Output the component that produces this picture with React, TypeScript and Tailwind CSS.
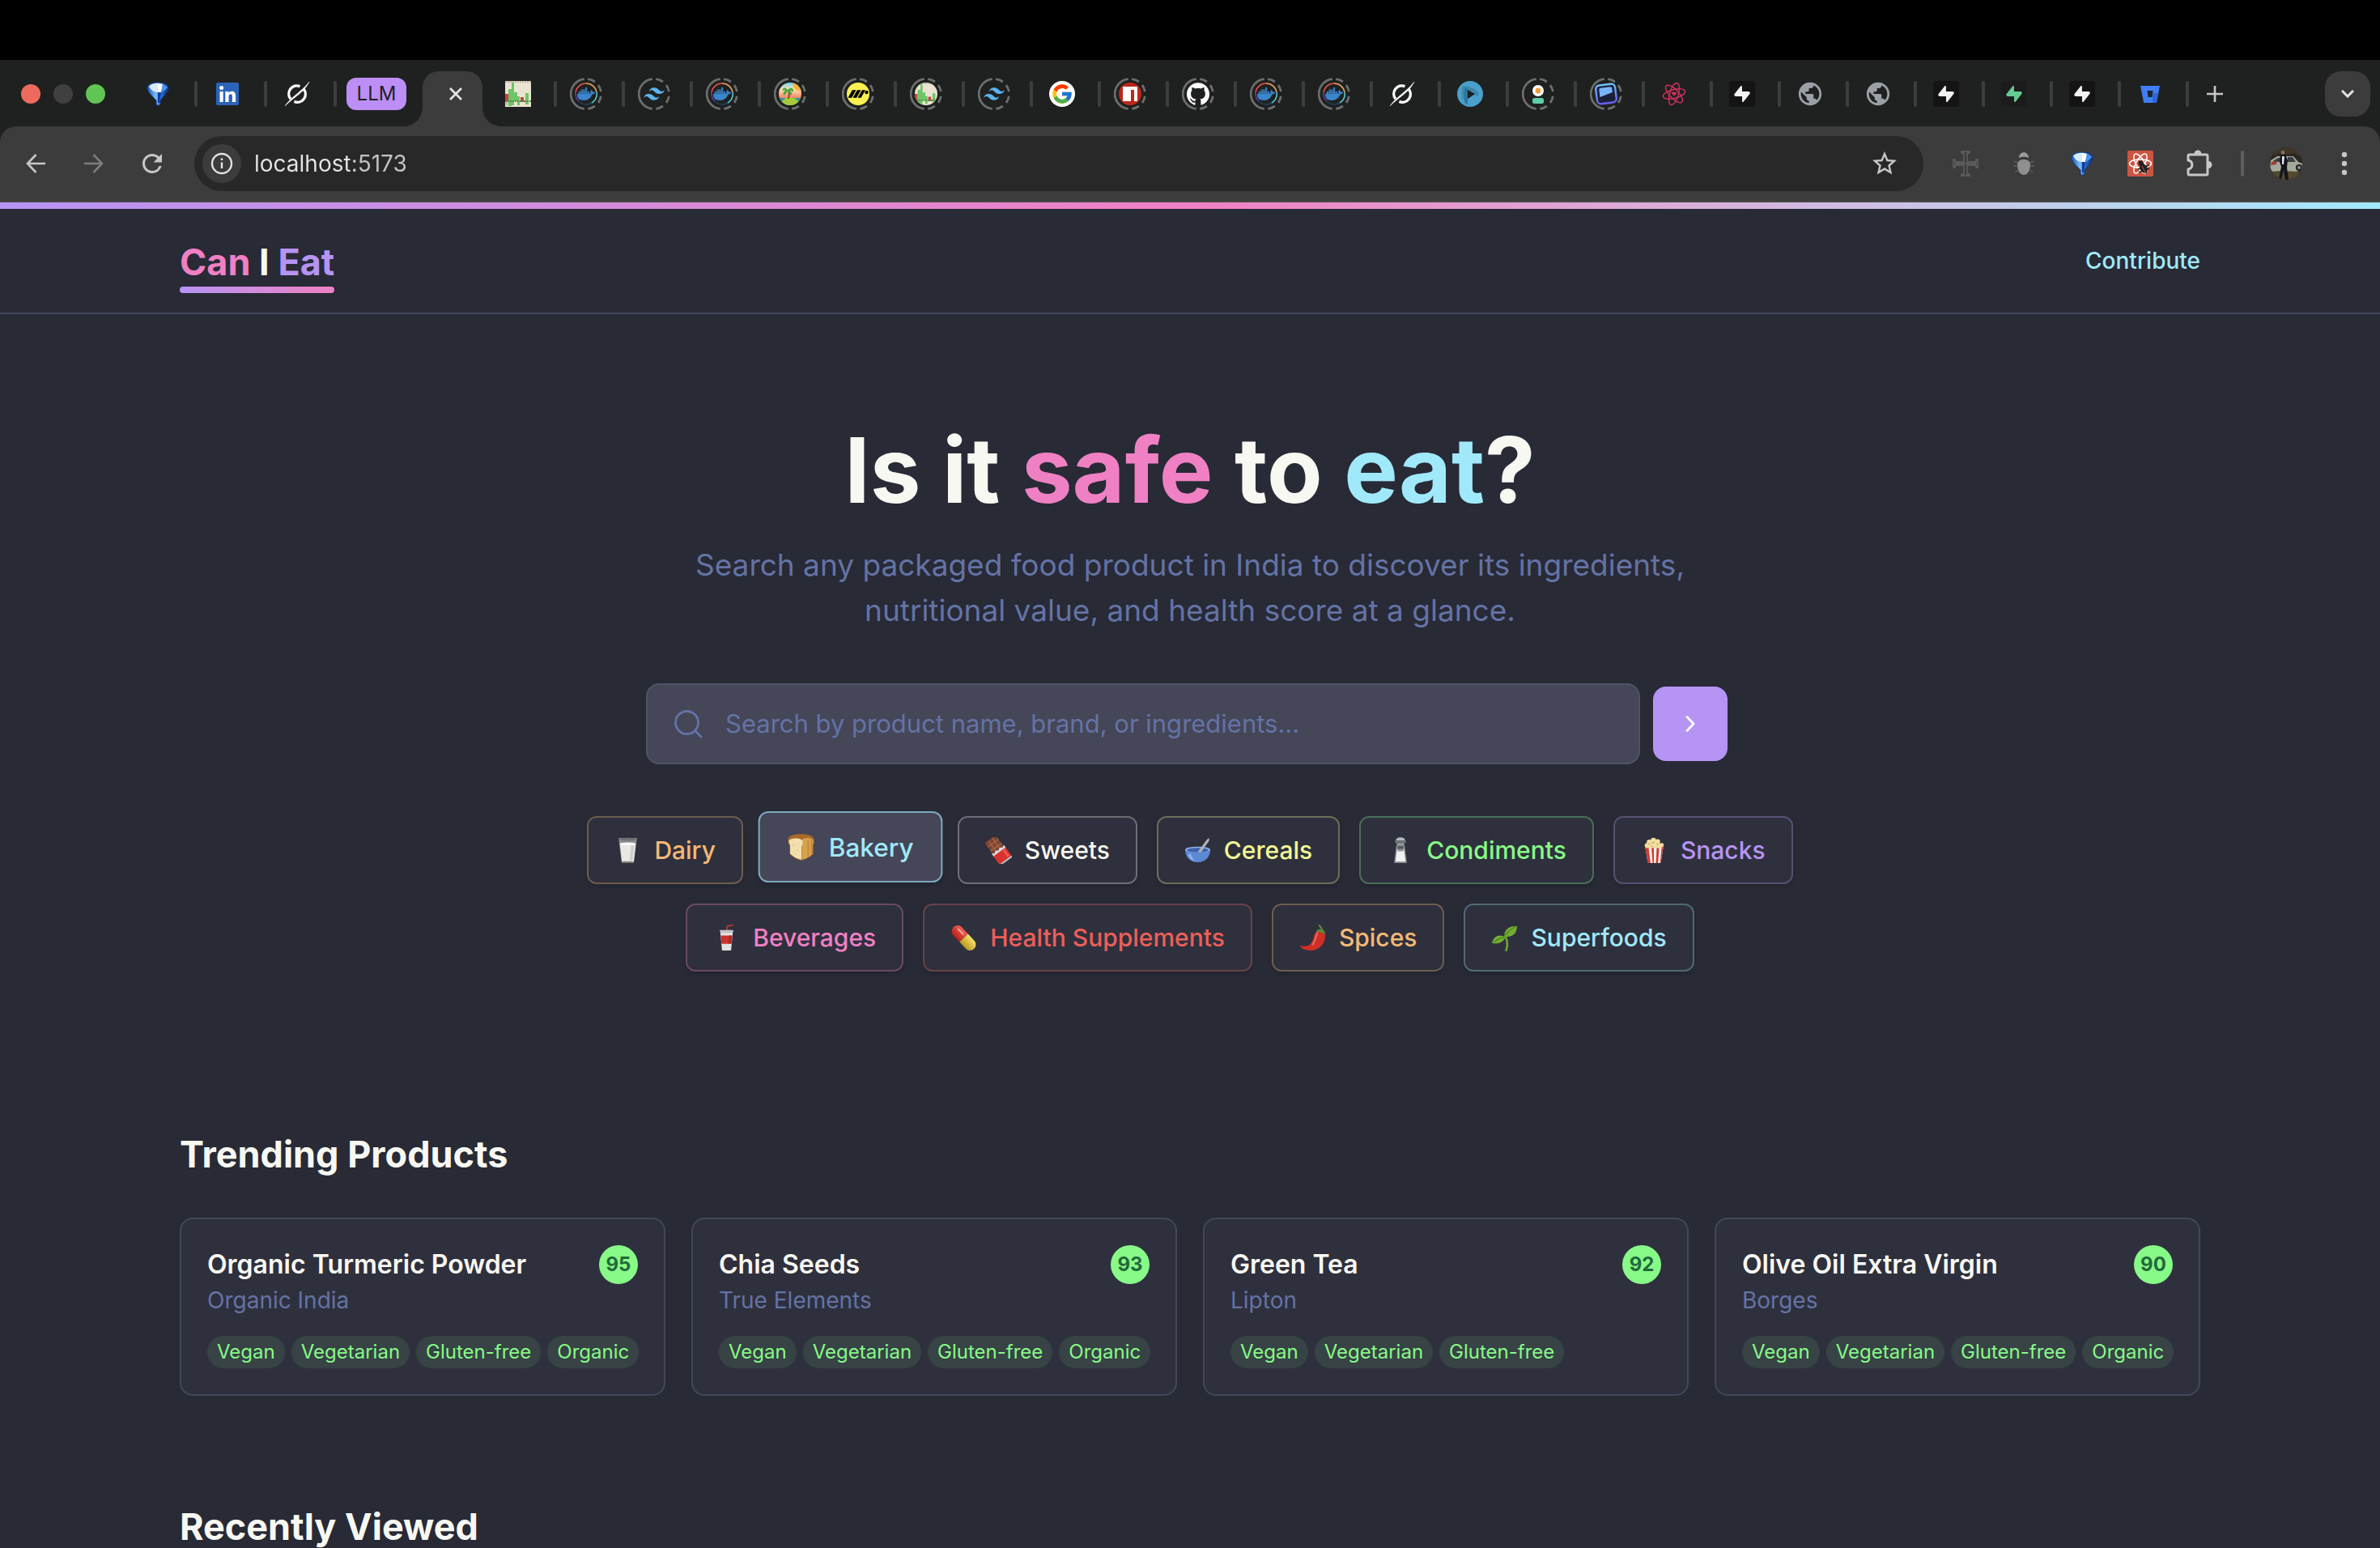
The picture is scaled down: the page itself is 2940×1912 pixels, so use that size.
import React from "react";
import { FcGoogle } from "react-icons/fc";
import { SiDocker, SiGithub, SiTailwindcss, SiSupabase } from "react-icons/si";
import { MdPublic, MdStarOutline, MdRefresh } from "react-icons/md";

/* ---------- tab favicons ---------- */

function LoadingRing({ children }: { children: React.ReactNode }) {
  return (
    <span className="relative flex size-10 items-center justify-center">
      <svg viewBox="0 0 40 40" className="absolute inset-0 size-10" fill="none" stroke="#6e6e6e" strokeWidth="2.8">
        <path d="M17.7 1.6A18.5 18.5 0 0 0 17.7 38.4" />
        <path d="M22.3 1.6A18.5 18.5 0 0 1 30.9 5" />
        <path d="M35 9.1A18.5 18.5 0 0 1 38.3 17.1" />
        <path d="M38.3 22.9A18.5 18.5 0 0 1 35 30.9" />
        <path d="M30.9 35A18.5 18.5 0 0 1 22.3 38.4" />
      </svg>
      {children}
    </span>
  );
}

function Funnel() {
  return (
    <svg viewBox="0 0 32 32" className="size-8">
      <defs>
        <linearGradient id="funnelBody" x1="0" x2="1">
          <stop offset="0" stopColor="#1a56b8" />
          <stop offset="0.4" stopColor="#7dbcf5" />
          <stop offset="0.6" stopColor="#2f7be0" />
          <stop offset="1" stopColor="#0b2a78" />
        </linearGradient>
      </defs>
      <path d="M3 9C3 4 9 2 16 2s13 2 13 7c0 4-6 10-10 15v4c0 3-5 3-5 0v-4C9 19 3 13 3 9z" fill="url(#funnelBody)" stroke="#123a86" strokeWidth="1" />
      <path d="M5 7c2-3 6-4 10-4l1 11c-4 0-8-2-11-7z" fill="#d6ebfd" />
      <path d="M15 3c3 0 5 0 7 1l-2 10h-4z" fill="#fff" />
      <path d="M22 4c3 1 5 2 6 4-2 3-5 5-8 6z" fill="#4a94ec" />
      <path d="M16 14h4l-2 13h-2z" fill="#0f3da0" />
    </svg>
  );
}

function LinkedIn() {
  return (
    <svg viewBox="0 0 28 28" className="size-7">
      <rect width="28" height="28" rx="2" fill="#2b63b8" />
      <circle cx="6.6" cy="6.4" r="2.5" fill="#fff" />
      <path d="M4.5 11h4.2v13H4.5zM11.3 11h4v1.8c.8-1.3 2.2-2.1 4-2.1 3.6 0 4.8 2.2 4.8 5.8V24h-4.2v-6.7c0-1.7-.4-3-2-3-1.8 0-2.4 1.3-2.4 3V24h-4.2z" fill="#fff" />
    </svg>
  );
}

function Slashed() {
  return (
    <svg viewBox="0 0 32 32" className="size-8" fill="none" stroke="#fff">
      <path d="M19.5 6.6A10 10 0 0 0 8 22.2" strokeWidth="3.4" />
      <path d="M12.4 25.4A10 10 0 0 0 24 9.8" strokeWidth="3.4" />
      <path d="M1 31C8 20 22 13 31 1 25 14 12 20 1 31z" fill="#fff" strokeWidth="0.5" />
    </svg>
  );
}

function BarChart({ round = false }: { round?: boolean }) {
  return (
    <svg viewBox="0 0 32 32" className={round ? "size-7 rounded-full" : "size-8"}>
      <rect width="32" height="32" fill="#ebe3d2" />
      <path d="M0 1h32" stroke="#a9a595" strokeWidth="1.5" strokeDasharray="2 1" />
      <path d="M0 16h4v9H0zM19 20h4v6h-4zM23 24h5v2h-5z" fill="#c9443c" />
      <path d="M4 10h4v21H4zM8 2h3v28H8zM11 14h4v11h-4zM15 19h3v11h-3zM25 15h4v14h-4z" fill="#6cc566" />
      <path d="M0 25h32" stroke="#5b8a4c" strokeWidth="2" strokeDasharray="2 1" />
      <path d="M2 22v8M21 21v5" stroke="#8a5a3a" strokeWidth="0.8" />
    </svg>
  );
}

function DockerTab() {
  return (
    <span className="relative flex size-7 items-center justify-center">
      <svg viewBox="0 0 28 28" className="absolute inset-0 size-7" fill="none" strokeWidth="1.5">
        <path d="M14 1A13 13 0 0 0 1 12" stroke="#e0524e" />
        <path d="M1 12A13 13 0 0 0 5 23" stroke="#6a3f9e" />
        <path d="M5 23A13 13 0 0 0 21 25" stroke="#22405a" />
        <path d="M21 25A13 13 0 0 0 27 12" stroke="#5bd0d6" />
        <path d="M27 12A13 13 0 0 0 14 1" stroke="#e8a65c" />
      </svg>
      <SiDocker className="size-[22px] text-[#3a86cd]" />
    </span>
  );
}

function Island() {
  return (
    <svg viewBox="0 0 28 28" className="size-7 rounded-full">
      <defs>
        <linearGradient id="islandSky" x1="0" y1="0" x2="0" y2="1">
          <stop offset="0" stopColor="#6fd3ee" />
          <stop offset="0.3" stopColor="#fde3b4" />
          <stop offset="0.65" stopColor="#f58b6c" />
        </linearGradient>
      </defs>
      <rect width="28" height="28" fill="url(#islandSky)" />
      <path d="M18 0h10v10a8 8 0 0 1-10-10z" fill="#f9b13c" />
      <path d="M0 19h28v9H0z" fill="#2f95a0" />
      <ellipse cx="14" cy="26" rx="11" ry="7.5" fill="#a6cb38" />
      <path d="M11 20c1-4 1-7 0-11l2 0c1 4 1 7 0 11z" fill="#7b4b22" />
      <path d="M11 9C8 5 5 6 4 10c2-1 3-1 4 0-2 1-3 3-2 6 2-1 4-3 5-6 2 3 3 5 5 6 0-3 0-5-2-6 1 0 3 0 4 2 1-5-3-7-7-3z" fill="#4fa53a" />
    </svg>
  );
}

function YellowMark() {
  return (
    <svg viewBox="0 0 28 28" className="size-7">
      <circle cx="14" cy="14" r="14" fill="#fcf151" />
      <path d="M2 18.500L7 9.500h4L6 18.500zM8 18.500l5-9h4l-5 9zM14 18.500l5-9h3.500l-5 9z" fill="#000" stroke="#000" strokeWidth="0.6" />
      <circle cx="24.500" cy="12" r="2.200" fill="#000" />
    </svg>
  );
}

function GoogleTab() {
  return (
    <span className="flex size-8 items-center justify-center rounded-full bg-white">
      <FcGoogle className="size-7" />
    </span>
  );
}

function Npm() {
  return (
    <svg viewBox="0 0 28 28" className="size-7">
      <circle cx="14" cy="14" r="14" fill="#bb271a" />
      <path d="M5 5h18v18h-4V9h-4v14H5z" fill="#fff" />
      <path d="M15 9h4v14h-4z" fill="#bb271a" />
    </svg>
  );
}

function PlayTab() {
  return (
    <svg viewBox="0 0 32 32" className="size-8">
      <circle cx="16" cy="16" r="16" fill="#4a9fcb" />
      <path d="M6 7c5-2 15 1 20 7 1 2 0 4-1 5L13 12v12c-4 0-7-2-7-5z" fill="#3b87ae" />
      <path d="M13 11l9 5-9 6v7c-3-1-4-3-4-5V10c0-2 2-3 4 1z" fill="#2f7398" />
      <path d="M13 11l9 5-9 6z" fill="#172026" />
    </svg>
  );
}

function PersonTab() {
  return (
    <svg viewBox="0 0 28 28" className="size-7">
      <circle cx="14" cy="10" r="7" fill="#fff" />
      <circle cx="14" cy="10" r="3.4" fill="#ef9b36" />
      <rect x="7" y="19" width="14" height="7" rx="2.5" fill="#5ecfa6" />
    </svg>
  );
}

function SlateTab() {
  return (
    <svg viewBox="0 0 28 28" className="size-7">
      <defs>
        <linearGradient id="slate" x1="0" y1="0" x2="0" y2="1">
          <stop offset="0" stopColor="#6cc3f7" />
          <stop offset="1" stopColor="#6a5cf0" />
        </linearGradient>
      </defs>
      <g transform="rotate(-7 14 14)">
        <rect x="2" y="2.5" width="24" height="23" rx="5" fill="#1b1f38" stroke="url(#slate)" strokeWidth="2.4" />
        <path d="M6 8c0-1 .8-2 2-2h12c1 0 2 1 2 2v5L6 17z" fill="#77b5f8" />
      </g>
    </svg>
  );
}

function AtomTab() {
  return (
    <svg viewBox="0 0 32 32" className="size-8" fill="none" stroke="#d2325f" strokeWidth="1.4">
      <ellipse cx="16" cy="16" rx="14" ry="5.4" transform="rotate(-14 16 16)" />
      <ellipse cx="16" cy="16" rx="14" ry="5.4" transform="rotate(46 16 16)" />
      <ellipse cx="16" cy="16" rx="14" ry="5.4" transform="rotate(106 16 16)" />
      <path d="M16 18.5l-3-3c-1-2 2-3 3-1 1-2 4-1 3 1z" fill="#d2325f" stroke="none" />
    </svg>
  );
}

function BoltTab({ green = false }: { green?: boolean }) {
  return (
    <span className={green ? "flex size-8 items-center justify-center rounded bg-[#1c1c1c]" : "flex size-8 items-center justify-center rounded bg-[#141414]"}>
      <SiSupabase className={green ? "size-5 text-[#65cb92]" : "size-5 text-[#f2f2f2]"} />
    </span>
  );
}

function Bucket() {
  return (
    <svg viewBox="0 0 28 28" className="size-7">
      <path d="M2 4h24l-4 20c0 .6-.5 1-1 1H7c-.6 0-1-.4-1-1z" fill="#3f7ff3" />
      <path d="M17 25h4c.5 0 1-.4 1-1l2.500-11h-7z" fill="#2f66d6" />
      <path d="M10.500 10h7l-1 8h-5z" fill="#1c2330" />
    </svg>
  );
}

const globe = <MdPublic className="size-[34px] text-[#9aa0a6]" />;
const docker = <LoadingRing><DockerTab /></LoadingRing>;
const tailwind = <LoadingRing><SiTailwindcss className="size-[26px] text-[#5bb4f0]" /></LoadingRing>;

const leadTabs: [string, React.ReactNode][] = [
  ["Filter", <Funnel />],
  ["LinkedIn", <LinkedIn />],
  ["Chat", <Slashed />],
];

const tabs: [string, React.ReactNode][] = [
  ["Board", <BarChart />],
  ["Docker", docker],
  ["Tailwind", tailwind],
  ["Docker", docker],
  ["Island", <LoadingRing><Island /></LoadingRing>],
  ["Motion", <LoadingRing><YellowMark /></LoadingRing>],
  ["Board", <LoadingRing><BarChart round /></LoadingRing>],
  ["Tailwind", tailwind],
  ["Google", <GoogleTab />],
  ["npm", <LoadingRing><Npm /></LoadingRing>],
  ["GitHub", <LoadingRing><SiGithub className="size-7 text-white" /></LoadingRing>],
  ["Docker", docker],
  ["Docker", docker],
  ["Chat", <Slashed />],
  ["Player", <PlayTab />],
  ["Profile", <LoadingRing><PersonTab /></LoadingRing>],
  ["Slate", <LoadingRing><SlateTab /></LoadingRing>],
  ["Atom", <AtomTab />],
  ["Supabase", <BoltTab />],
  ["Page", globe],
  ["Page", globe],
  ["Supabase", <BoltTab />],
  ["Supabase", <BoltTab green />],
  ["Supabase", <BoltTab />],
  ["Bitbucket", <Bucket />],
];

function Tab({ label, children }: { label: string; children: React.ReactNode }) {
  return (
    <>
      <button aria-label={label} className="mr-2 flex h-12 min-w-0 flex-1 items-center justify-center">
        {children}
      </button>
      <span className="h-8 w-1 shrink-0 rounded-full bg-[#3d3d3d]" />
    </>
  );
}

function TabStrip() {
  return (
    <div className="flex h-[82px] items-center bg-[#1f2120] pt-px">
      <div className="ml-[26px] flex w-[132px] shrink-0 gap-4">
        <span className="size-6 rounded-full bg-[#ed6a5e]" />
        <span className="size-6 rounded-full bg-[#3f403f]" />
        <span className="size-6 rounded-full bg-[#61c554]" />
      </div>
      <div className="flex w-[258px] shrink-0 items-center">
        {leadTabs.map(([label, icon], i) => (
          <Tab key={i} label={label}>{icon}</Tab>
        ))}
      </div>
      <button className="mx-3 h-10 w-[74px] shrink-0 rounded-xl bg-[#bd8ef5] text-2xl text-[#1f2120]">LLM</button>
      <div className="relative ml-2 flex h-[68px] w-[74px] shrink-0 items-center justify-center self-end rounded-t-[20px] bg-[#3c3c3c] pb-3">
        <svg viewBox="0 0 24 24" className="absolute -left-6 bottom-0 size-6" fill="#3c3c3c"><path d="M24 0v24H0C14 24 24 14 24 0z" /></svg>
        <svg viewBox="0 0 24 24" className="absolute -right-6 bottom-0 size-6" fill="#3c3c3c"><path d="M0 0v24h24C10 24 0 14 0 0z" /></svg>
        <button aria-label="Close tab" className="ml-2 flex size-8 items-center justify-center">
          <svg viewBox="0 0 16 16" className="size-4" stroke="#e3e3e3" strokeWidth="2.8"><path d="M1 1l14 14M15 1L1 15" /></svg>
        </button>
      </div>
      <div className="ml-2 flex min-w-0 flex-1 items-center">
        {tabs.map(([label, icon], i) => (
          <Tab key={i} label={label}>{icon}</Tab>
        ))}
      </div>
      <button aria-label="New tab" className="ml-4 flex size-8 shrink-0 items-center justify-center">
        <svg viewBox="0 0 20 20" className="size-5" stroke="#c7c7c7" strokeWidth="2.6"><path d="M10 0v20M0 10h20" /></svg>
      </button>
      <button aria-label="Search tabs" className="mr-3 ml-[120px] flex h-14 w-14 shrink-0 items-center justify-center rounded-[20px] bg-[#3c3c3c]">
        <svg viewBox="0 0 16 10" className="h-2.5 w-4" fill="none" stroke="#e3e3e3" strokeWidth="3"><path d="M1 1l7 7 7-7" /></svg>
      </button>
    </div>
  );
}

/* ---------- toolbar ---------- */

function Toolbar() {
  return (
    <div className="bg-[#1f2120]">
      <div className="flex h-[94px] items-center rounded-t-[20px] border-b-2 border-[#474747] bg-[#3c3c3c]">
        <button aria-label="Back" className="ml-2 flex w-[72px] shrink-0 justify-center">
          <svg viewBox="0 0 24 24" className="size-6" fill="none" stroke="#c7c7c7" strokeWidth="2.6"><path d="M24 12H2M12.500 1L2 12l10.500 11" /></svg>
        </button>
        <button aria-label="Forward" className="flex w-[72px] shrink-0 justify-center">
          <svg viewBox="0 0 24 24" className="size-6" fill="none" stroke="#7c7c7c" strokeWidth="2.6"><path d="M0 12h22M11.500 1L22 12 11.500 23" /></svg>
        </button>
        <button aria-label="Reload" className="flex w-[72px] shrink-0 justify-center">
          <MdRefresh className="size-9 text-[#c7c7c7]" />
        </button>
        <div className="ml-4 flex h-[68px] min-w-0 flex-1 items-center rounded-full bg-[#282828] pr-[30px] pl-[10px]">
          <button aria-label="Site information" className="flex size-12 shrink-0 items-center justify-center rounded-full bg-[#3c3c3c]">
            <svg viewBox="0 0 28 28" className="size-7" fill="none" stroke="#e3e3e3" strokeWidth="2.4">
              <circle cx="14" cy="14" r="12" />
              <path d="M14 12.500v7.500M14 7.500v2.600" />
            </svg>
          </button>
          <input
            aria-label="Address"
            defaultValue="localhost:5173"
            className="ml-4 min-w-0 flex-1 bg-[linear-gradient(90deg,#e6e6e6_118px,#c4c4c4_118px)] bg-clip-text text-[28px] leading-10 text-transparent outline-none"
          />
          <button aria-label="Bookmark" className="flex shrink-0"><MdStarOutline className="size-9 text-[#c7c7c7]" /></button>
        </div>
        <div className="ml-4 flex shrink-0 items-center">
          <button aria-label="Ruler extension" className="flex w-[72px] justify-center">
            <svg viewBox="0 0 32 32" className="size-8" fill="none" stroke="#626262" strokeWidth="1.400">
              <path d="M11 1h10v2h-3v11h11v-3h2v10h-2v-3H18v11h3v2H11v-2h3V18H3v3H1V11h2v3h11V3h-3z" />
              <path d="M3 16h26" stroke="#7c7c7c" strokeWidth="1" />
            </svg>
          </button>
          <button aria-label="Debug extension" className="flex w-[72px] justify-center">
            <svg viewBox="0 0 32 32" className="size-8">
              <path d="M10 9c0-9 12-9 12 0-4-2-8-2-12 0z" fill="#9b9b9b" />
              <path d="M8 17c0-8 16-8 16 0 0 7-3 13-8 13s-8-6-8-13z" fill="#8f8f8f" />
              <path d="M8 15l-4-2M8 19H3M9 24l-4 3M24 15l4-2M24 19h5M23 24l4 3" stroke="#5c5c5c" strokeWidth="1.400" />
            </svg>
          </button>
          <button aria-label="Filter extension" className="flex w-[72px] justify-center"><Funnel /></button>
          <button aria-label="React extension" className="flex w-[72px] justify-center">
            <svg viewBox="0 0 32 32" className="size-8" fill="none">
              <rect width="32" height="32" rx="2" fill="#cb5442" />
              <g stroke="#fff" strokeWidth="1.500">
                <ellipse cx="16" cy="16" rx="13.500" ry="5.200" />
                <ellipse cx="16" cy="16" rx="13.500" ry="5.200" transform="rotate(60 16 16)" />
                <ellipse cx="16" cy="16" rx="13.500" ry="5.200" transform="rotate(120 16 16)" />
              </g>
              <circle cx="16.500" cy="15.500" r="3" fill="#222" />
              <ellipse cx="20" cy="22" rx="4.500" ry="6" transform="rotate(-30 20 22)" fill="#222" />
              <path d="M13 23l14-5M14 27l13-5M24 28l-8-9" stroke="#222" strokeWidth="1.500" />
              <path d="M18 19l4 8" stroke="#cb5442" strokeWidth="1" />
            </svg>
          </button>
          <button aria-label="Extensions" className="flex w-[72px] justify-center">
            <svg viewBox="0 0 34 34" className="size-[34px]" fill="none">
              <path d="M4 7.500Q4 6 5.500 6H26.500Q28 6 28 7.500V29.500Q28 31 26.500 31H5.500Q4 31 4 29.500V24C10.500 23 10.500 14 4 13z" stroke="#c7c7c7" strokeWidth="3" strokeLinejoin="round" />
              <path d="M11.500 5a4.500 4.500 0 0 1 9 0zM29 14a4.500 4.500 0 0 1 0 9z" fill="#c7c7c7" />
            </svg>
          </button>
          <span className="mx-4 h-8 w-1 rounded-full bg-[#5e5e5e]" />
          <button aria-label="Profile" className="ml-4 flex">
            <svg viewBox="0 0 40 40" className="size-10 rounded-full">
              <rect width="40" height="40" fill="#2a2620" />
              <path d="M0 6l8-6h24l8 9-4 2-6-4-8 2-8-3-8 4z" fill="#3c362b" />
              <path d="M1 16l8-5h20l6 7 5 2v8l-8 2H3l-3-4z" fill="#a4a99c" />
              <path d="M5 16l5-3h5v5H4zM22 12h6l4 6H22z" fill="#3a403e" />
              <path d="M2 18l6-1v4l-7 1z" fill="#a33a32" />
              <circle cx="36" cy="25" r="4" fill="#1e1e1c" />
              <circle cx="36" cy="25" r="2" fill="#8d918a" />
              <path d="M0 30l14-1 22 1v10H0z" fill="#54482f" />
              <path d="M13 9h6l3 7-1 9 2 15h-4l-2-12-3 11h-3l3-15-2-6z" fill="#14151a" />
              <path d="M15 11h3l-1 10h-2z" fill="#dfe3ea" />
              <circle cx="16" cy="6.500" r="2.400" fill="#8f6b55" />
            </svg>
          </button>
          <button aria-label="Menu" className="mr-10 ml-12 flex">
            <svg viewBox="0 0 8 30" className="h-[30px] w-2" fill="#c7c7c7">
              <circle cx="4" cy="4" r="3.200" />
              <circle cx="4" cy="15" r="3.200" />
              <circle cx="4" cy="26" r="3.200" />
            </svg>
          </button>
        </div>
      </div>
    </div>
  );
}

/* ---------- category drawings ---------- */

function Emoji({ children }: { children: React.ReactNode }) {
  return <svg viewBox="0 0 32 32" className="size-[33px] shrink-0" aria-hidden="true">{children}</svg>;
}

const milk = (
  <Emoji>
    <path d="M5 1h22l-3.500 28c-.2 1.300-1 2-2 2h-11c-1 0-1.800-.7-2-2z" fill="#8d9092" />
    <path d="M6.500 8h19l-2.300 20c-.1 1-.8 1.500-1.700 1.500h-11c-.9 0-1.600-.5-1.700-1.500z" fill="#e9e8e4" />
    <ellipse cx="16" cy="2.500" rx="11" ry="1.800" fill="#6f7274" />
    <ellipse cx="16" cy="8" rx="9.500" ry="1.600" fill="#fafaf8" />
    <path d="M20 10l-1.500 18h3L23.500 10z" fill="#cfcdc8" />
    <path d="M10 29h12v2H10z" fill="#77797a" />
  </Emoji>
);

const bread = (
  <Emoji>
    <path d="M1 8C1 3 7 1 16 1s15 2 15 8c0 3-1 4-1 5v9c0 2-10 8-14 8S3 25 3 23V14C2 12 1 11 1 8z" fill="#a9692a" />
    <path d="M17 8c1-4 13-3 13 1 0 3-1 4-1 5v9c0 2-8 7-12 7z" fill="#d6a24e" />
    <path d="M24 8v18M28 8v15" stroke="#bd8333" strokeWidth="1.200" />
    <path d="M2 9c0-4 16-5 16 1 0 3-1.500 4-1.500 6v14C12 30 4 25 3.500 23v-9C3 12 2 11 2 9z" fill="#f2dfae" />
    <path d="M6 13l2 1M11 19l2 1M8 23l2 0M12 13h1" stroke="#dcc184" />
  </Emoji>
);

const chocolate = (
  <Emoji>
    <g transform="rotate(-36 16 16)">
      <rect x="8" y="-1" width="16" height="18" rx="1" fill="#7c4630" />
      <path d="M13.300 0v16M18.700 0v16M8 5h16M8 11h16" stroke="#a8694b" strokeWidth="1.200" />
      <path d="M7 14l3 2 3-2 3 2 3-2 3 2 3-2v5H7z" fill="#d9dde0" />
      <rect x="7" y="18" width="18" height="14" rx="1" fill="#d8322d" />
      <path d="M7 30h18v2H7z" fill="#b0bcc4" />
      <path d="M20 18h3v11h-3z" fill="#ec554d" />
    </g>
  </Emoji>
);

const bowl = (
  <Emoji>
    <path d="M1 15c0 9 6 15 15 15s15-6 15-15z" fill="#5c88d4" />
    <ellipse cx="16" cy="15" rx="15" ry="3.600" fill="#8fb4ec" />
    <ellipse cx="16" cy="15.500" rx="13" ry="2.600" fill="#3d63ac" />
    <path d="M16 18L27 3l3-2-.5 3.500L20 18z" fill="#b0b2b8" />
    <path d="M4 20c2 5 5 8 9 9-3-3-4-6-5-9z" fill="#8fb4ec" />
  </Emoji>
);

const salt = (
  <Emoji>
    <path d="M11 4c0-5 11-5 11 0z" fill="#b4b9bd" />
    <path d="M10 4h13v3H10z" fill="#6d7377" />
    <path d="M12 7h9v3h-9z" fill="#969b9f" />
    <path d="M11.500 10h10l2.500 20c0 .6-.5 1-1 1H10c-.6 0-1-.4-1-1z" fill="#8f9396" />
    <path d="M12.500 14l1 3h6l1-3 2 15h-12z" fill="#f2f2f1" />
    <path d="M13 11h7v3h-7z" fill="#4e5356" />
  </Emoji>
);

const popcorn = (
  <Emoji>
    <path d="M5 11h22l-3 18c-.2 1.300-1 2-2 2H10c-1 0-1.800-.7-2-2z" fill="#f2efec" />
    <path d="M5 11h4l2.500 20H10c-1 0-1.800-.7-2-2zM12.500 11h3v20h-1.500zM19 11h3l-1.500 20H18zM25 11h2l-3 18c-.2 1-.5 1.500-1 1.800z" fill="#d33a32" />
    <g fill="#f2dda0">
      <circle cx="7.500" cy="10" r="3" /><circle cx="12" cy="10.500" r="3.200" /><circle cx="17" cy="10.500" r="3.200" /><circle cx="22" cy="10.500" r="3.200" /><circle cx="25" cy="9.500" r="2.400" />
      <circle cx="10" cy="6" r="3" /><circle cx="15" cy="4" r="3.200" /><circle cx="20" cy="5.500" r="3" /><circle cx="16" cy="8" r="3" />
    </g>
    <g fill="#c99f4c"><circle cx="10" cy="8" r="1" /><circle cx="15" cy="6.500" r="1" /><circle cx="20" cy="8.500" r="1" /><circle cx="13" cy="11" r=".9" /></g>
  </Emoji>
);

const drink = (
  <Emoji>
    <path d="M16 9l1-7 7-2" fill="none" stroke="#b03a35" strokeWidth="1.800" />
    <path d="M8.500 9h15l-2 21c-.1.700-.6 1-1 1h-9c-.5 0-1-.4-1-1z" fill="#e2e2e0" />
    <path d="M8 6.500h16V9H8z" fill="#c4c6c8" />
    <path d="M9 13h14l-1 10H10z" fill="#c9342d" />
    <path d="M19 13h3l-1 10h-2z" fill="#a82721" />
  </Emoji>
);

const pill = (
  <Emoji>
    <defs>
      <linearGradient id="pillRed" x1="0" x2="1"><stop offset="0" stopColor="#b61f19" /><stop offset="1" stopColor="#f06054" /></linearGradient>
      <linearGradient id="pillYellow" x1="0" x2="1"><stop offset="0" stopColor="#b99722" /><stop offset="1" stopColor="#f6e268" /></linearGradient>
    </defs>
    <g transform="rotate(-43 16 16)">
      <path d="M9 16V5a7 7 0 0 1 14 0v11z" fill="url(#pillRed)" />
      <path d="M9 16h14v11a7 7 0 0 1-14 0z" fill="url(#pillYellow)" />
      <path d="M18.500 4v8" stroke="#f9a49c" strokeWidth="2" strokeLinecap="round" />
    </g>
  </Emoji>
);

const pepper = (
  <Emoji>
    <path d="M27 9c1-3 0-5-3-8" fill="none" stroke="#5d8a35" strokeWidth="2" strokeLinecap="round" />
    <path d="M20 9c4-4 11-1 11 5 0 9-8 17-17 17C7 31 2 29 1 25c6 2 11 1 14-4 2-4 2-8 5-12z" fill="#cf2f27" />
    <path d="M22 10c-3 4-2 9-6 14" fill="none" stroke="#ee7268" strokeWidth="1.800" strokeLinecap="round" />
    <path d="M20 9c1-3 4-4 7-3 3 0 4 3 4 6-2-2-3-2-4-2-2-1-4-2-7-1z" fill="#5d8a35" />
  </Emoji>
);

const sprout = (
  <Emoji>
    <path d="M18 31c2-6 2-11-1-17" fill="none" stroke="#6aa52c" strokeWidth="2.600" strokeLinecap="round" />
    <path d="M16 14C15 7 21 1 31 2c0 9-6 14-15 12z" fill="#74ad33" />
    <path d="M17 15c-6-4-14-2-16 7 7 2 14-1 16-7z" fill="#74ad33" />
    <path d="M17 13c3-5 7-8 12-10M16 15c-5 1-9 3-13 6" stroke="#3f7a1c" strokeWidth="1" fill="none" />
  </Emoji>
);

const categories = [
  { name: "Dairy", icon: milk, tone: "text-[#f4b976] border-[#6d5c4f]" },
  { name: "Bakery", icon: bread, tone: "text-[#a0e9fa] border-[#7aa9bd]", active: true },
  { name: "Sweets", icon: chocolate, tone: "text-[#f8f8f2] border-[#6c6d75]" },
  { name: "Cereals", icon: bowl, tone: "text-[#f2fa95] border-[#6b6e59]" },
  { name: "Condiments", icon: salt, tone: "text-[#87fa87] border-[#496e55]" },
  { name: "Snacks", icon: popcorn, tone: "text-[#b694f3] border-[#584f74]" },
  { name: "Beverages", icon: drink, tone: "text-[#ef80c3] border-[#6b4866]" },
  { name: "Health Supplements", icon: pill, tone: "text-[#ec5f59] border-[#6a4049]" },
  { name: "Spices", icon: pepper, tone: "text-[#f4b976] border-[#6d5c4f]" },
  { name: "Superfoods", icon: sprout, tone: "text-[#a0e9fa] border-[#516976]" },
];

const products = [
  { name: "Organic Turmeric Powder", brand: "Organic India", score: 95, tags: ["Vegan", "Vegetarian", "Gluten-free", "Organic"] },
  { name: "Chia Seeds", brand: "True Elements", score: 93, tags: ["Vegan", "Vegetarian", "Gluten-free", "Organic"] },
  { name: "Green Tea", brand: "Lipton", score: 92, tags: ["Vegan", "Vegetarian", "Gluten-free"] },
  { name: "Olive Oil Extra Virgin", brand: "Borges", score: 90, tags: ["Vegan", "Vegetarian", "Gluten-free", "Organic"] },
];

/* ---------- page ---------- */

function SiteHeader() {
  return (
    <header className="border-b-2 border-[#44475a]">
      <div className="mx-auto flex max-w-[2560px] items-start justify-between px-8 pt-8 pb-7">
        <a href="/" className="relative text-[45px] leading-[68px] font-bold whitespace-pre">
          <span className="text-[#ef80c3]">Can</span>
          <span className="text-[#f8f8f2]"> I </span>
          <span className="text-[#b694f3]">Eat</span>
          <span className="absolute inset-x-0 -bottom-1 h-2 rounded bg-linear-to-r from-[#b694f3] to-[#ef80c3]" />
        </a>
        <nav>
          <a href="/contribute" className="text-[28px] leading-[64px] font-medium text-[#a0e9fa]">Contribute</a>
        </nav>
      </div>
    </header>
  );
}

function Hero() {
  return (
    <section className="flex flex-col items-center py-32">
      <h1 className="text-[112px] leading-[128px] font-bold text-[#f8f8f2]">
        Is it <span className="text-[#ef80c3]">safe</span> to <span className="text-[#a0e9fa]">eat</span>?
      </h1>
      <p className="mt-[26px] max-w-[1344px] text-center text-[37px] leading-[56px] text-[#6473a5]">
        Search any packaged food product in India to discover its ingredients, <br />
        nutritional value, and health score at a glance.
      </p>
      <form className="mt-[62px] flex w-full max-w-[1344px] items-center gap-4" onSubmit={(e) => e.preventDefault()}>
        <label className="flex h-[100px] min-w-0 flex-1 items-center rounded-2xl border-2 border-[#505268] bg-[#454658] px-8">
          <svg viewBox="0 0 36 36" className="size-9 shrink-0" fill="none" stroke="#6473a5" strokeWidth="2.800" strokeLinecap="round">
            <circle cx="16.500" cy="16.500" r="14" />
            <path d="M27 27l7 7" />
          </svg>
          <input
            type="search"
            aria-label="Search products"
            placeholder="Search by product name, brand, or ingredients..."
            className="ml-7 min-w-0 flex-1 bg-transparent text-[31px] leading-10 text-[#f8f8f2] outline-none placeholder:text-[#6473a5]"
          />
        </label>
        <button aria-label="Search" className="mr-2 flex size-[92px] shrink-0 items-center justify-center rounded-2xl bg-[#b694f3]">
          <svg viewBox="0 0 12 20" className="h-5 w-3" fill="none" stroke="#fff" strokeWidth="2.800" strokeLinecap="round" strokeLinejoin="round"><path d="M2 1.500l8 8.500-8 8.500" /></svg>
        </button>
      </form>
      <div className="mt-16 flex max-w-[1536px] flex-wrap justify-center gap-6">
        {categories.map((c) => (
          <button
            key={c.name}
            className={`flex h-[84px] items-center gap-4 rounded-xl border-2 px-8 text-[30px] leading-12 font-medium shadow-md shadow-black/10 ${c.tone} ${c.active ? "-translate-y-1 scale-105 bg-[#454658]" : "bg-[#2f303d]"}`}
          >
            {c.icon}
            {c.name}
          </button>
        ))}
      </div>
    </section>
  );
}

function ProductCard({ product }: { product: (typeof products)[number] }) {
  return (
    <article className="rounded-2xl border-2 border-[#44475a] bg-[#2f303d] p-8">
      <div className="flex items-start justify-between">
        <h3 className="text-[32px] leading-12 font-semibold text-[#f8f8f2]">{product.name}</h3>
        <span className="flex size-12 shrink-0 items-center justify-center rounded-full bg-[#87fa87] text-2xl font-bold text-[#22693a]">{product.score}</span>
      </div>
      <p className="text-[28px] leading-10 text-[#6473a5]">{product.brand}</p>
      <ul className="mt-6 flex gap-2">
        {product.tags.map((t) => (
          <li key={t} className="rounded-full bg-[#374345] px-3 text-2xl leading-10 whitespace-nowrap text-[#87fa87]">{t}</li>
        ))}
      </ul>
    </article>
  );
}

export default function App() {
  return (
    <div className="flex h-screen flex-col overflow-hidden bg-[#282a36] font-['Inter',sans-serif]">
      <div className="h-[74px] shrink-0 bg-black" />
      <div className="shrink-0">
        <TabStrip />
        <Toolbar />
      </div>
      <div className="min-h-0 flex-1 overflow-hidden">
        <div className="h-2 bg-linear-to-r from-[#b694f3] via-[#ef80c3] to-[#a0e9fa]" />
        <SiteHeader />
        <main className="mx-auto max-w-[2560px] px-8">
          <Hero />
          <section className="mt-16">
            <h2 className="text-[45px] leading-[68px] font-bold text-[#f8f8f2]">Trending Products</h2>
            <div className="mt-11 grid grid-cols-4 gap-8">
              {products.map((p) => <ProductCard key={p.name} product={p} />)}
            </div>
          </section>
          <section className="mt-32">
            <h2 className="text-[45px] leading-[68px] font-bold text-[#f8f8f2]">Recently Viewed</h2>
          </section>
        </main>
      </div>
    </div>
  );
}
